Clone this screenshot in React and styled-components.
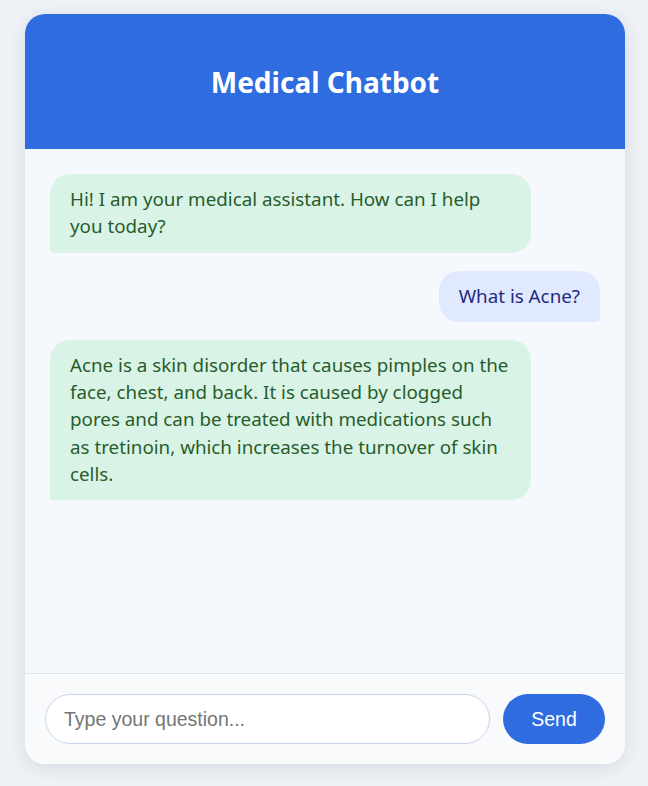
import styled, { createGlobalStyle } from 'styled-components'

const GlobalStyle = createGlobalStyle`
  html, body {
    margin: 0;
    padding: 0;
    background: #eef1f5;
  }
  body {
    font-family: "Noto Sans", "Open Sans", sans-serif;
  }
`;

const Page = styled.div`
  width: 648px;
  height: 786px;
  padding: 14px 23px 22px 25px;
  box-sizing: border-box;
`;

const Card = styled.div`
  width: 600px;
  height: 750px;
  display: flex;
  flex-direction: column;
  border-radius: 20px;
  overflow: hidden;
  background: #f8fafc;
  box-shadow: 0 4px 18px rgba(30, 45, 80, 0.1);
`;

const Header = styled.header`
  height: 135px;
  flex-shrink: 0;
  display: flex;
  align-items: center;
  justify-content: center;
  background: #2e6cdf;
  & > h1 {
    margin: 0;
    color: #ffffff;
    font-family: "Noto Sans", sans-serif;
    font-size: 28px;
    font-weight: 700;
  }
`;

const Messages = styled.div`
  flex: 1;
  display: flex;
  flex-direction: column;
  gap: 18px;
  padding: 25px;
  background: #f5f8fc;
  border-bottom: 1px solid #e1e5ea;
`;

const Bubble = styled.div`
  max-width: 441px;
  padding: 12px 20px;
  font-size: 18.8px;
  line-height: 27.3px;
  align-self: ${p => (p.$user ? 'flex-end' : 'flex-start')};
  background: ${p => (p.$user ? '#e0e9fd' : '#d9f4e6')};
  color: ${p => (p.$user ? '#1f2b84' : '#285c2c')};
  border-radius: ${p => (p.$user ? '20px 20px 4px 20px' : '20px 20px 20px 4px')};
`;

const Footer = styled.form`
  height: 90px;
  flex-shrink: 0;
  display: flex;
  align-items: center;
  gap: 13px;
  padding: 0 20px;
  box-sizing: border-box;
  background: #f8fafc;
`;

const Input = styled.input`
  flex: 1;
  height: 50px;
  box-sizing: border-box;
  padding: 0 18px;
  border: 1px solid #c8d4ec;
  border-radius: 25px;
  background: #ffffff;
  font-family: "Liberation Sans", Arial, sans-serif;
  font-size: 19.5px;
  outline: none;
  &::placeholder {
    color: #757575;
  }
`;

const SendButton = styled.button`
  width: 102px;
  height: 50px;
  border: none;
  border-radius: 25px;
  background: #2e6cdf;
  color: #ffffff;
  font-family: "Liberation Sans", Arial, sans-serif;
  font-size: 19.5px;
  cursor: pointer;
`;

const messages = [
  { id: 1, user: false, text: 'Hi! I am your medical assistant. How can I help you today?' },
  { id: 2, user: true, text: 'What is Acne?' },
  {
    id: 3,
    user: false,
    text: 'Acne is a skin disorder that causes pimples on the face, chest, and back. It is caused by clogged pores and can be treated with medications such as tretinoin, which increases the turnover of skin cells.',
  },
]

const App = () => {
  return (
    <>
      <GlobalStyle />
      <Page>
        <Card>
          <Header>
            <h1>Medical Chatbot</h1>
          </Header>
          <Messages>
            {messages.map(m => (
              <Bubble key={m.id} $user={m.user}>{m.text}</Bubble>
            ))}
          </Messages>
          <Footer onSubmit={e => e.preventDefault()}>
            <Input type="text" placeholder="Type your question..." />
            <SendButton type="submit">Send</SendButton>
          </Footer>
        </Card>
      </Page>
    </>
  )
}

export default App
